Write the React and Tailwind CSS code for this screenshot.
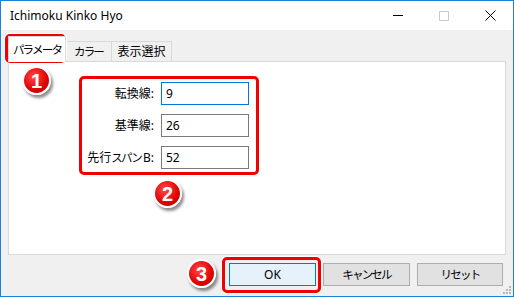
import React from 'react';

const font = { fontFamily: '"Noto Sans", "Noto Sans CJK JP", sans-serif' };

// katakana are narrower in the Windows UI font, so squeeze them a little
const Kana = ({ children }) => <span className="text-[11.5px] tracking-[-1.8px]">{children}</span>;

const Badge = ({ n, className }) => (
    <div
        className={`absolute w-[29px] h-[29px] rounded-full border-2 border-white bg-[radial-gradient(circle_at_40%_35%,#ff4a4a,#e00000_60%,#b80000)] shadow-[2px_3px_3px_rgba(0,0,0,0.45)] flex items-center justify-center text-white text-[20px] font-bold leading-none ${className}`}
        style={{ fontFamily: '"Liberation Sans", Arial, sans-serif' }}
    >
        {n}
    </div>
);

const Mark = ({ className }) => (
    <div className={`absolute rounded-[5px] border-[3px] border-[#f00000] shadow-[0_0_0_1px_#ffffff] pointer-events-none ${className}`} />
);

const fields = [
    { label: <>転換線:</>, value: '9', active: true },
    { label: <>基準線:</>, value: '26' },
    { label: <>先行<Kana>スパン</Kana><span className="ml-[2px]">B:</span></>, value: '52' },
];

export default function App() {
    return (
        <div
            className="relative w-[514px] h-[297px] border border-[#1883d7] bg-[#f0f0f0] flex flex-col text-[12px] text-black overflow-hidden"
            style={font}
        >
            {/* title bar */}
            <div className="h-[29px] bg-white flex items-center pl-[9px] shrink-0">
                <span className="flex-1 text-[12px]">Ichimoku Kinko Hyo</span>
                <div className="flex items-center h-full">
                    <div className="w-[46px] flex justify-center">
                        <div className="w-[10px] h-px bg-black" />
                    </div>
                    <div className="w-[46px] flex justify-center">
                        <div className="w-[10px] h-[10px] border border-[#cccccc]" />
                    </div>
                    <div className="w-[46px] flex justify-center">
                        <svg width="11" height="11" viewBox="0 0 11 11">
                            <path d="M0.5 0.5 L10.5 10.5 M10.5 0.5 L0.5 10.5" stroke="#000" strokeWidth="1" />
                        </svg>
                    </div>
                </div>
            </div>

            {/* tabs */}
            <div className="h-[31px] flex items-end pl-[7px] shrink-0">
                <div className="relative z-10 h-[26px] w-[58px] -mb-px bg-white border border-b-0 border-[#d9d9d9] flex items-center justify-center">
                    <Kana>パラメータ</Kana>
                </div>
                <div className="h-[20px] w-[46px] border border-l-0 border-b-0 border-[#d9d9d9] bg-[#f0f0f0] flex items-center justify-center">
                    <Kana>カラー</Kana>
                </div>
                <div className="h-[20px] w-[60px] border border-l-0 border-b-0 border-[#d9d9d9] bg-[#f0f0f0] flex items-center justify-center">
                    表示選択
                </div>
            </div>

            {/* panel */}
            <div className="mx-[7px] h-[194px] bg-white border border-[#d9d9d9] pt-[20px] pl-[64px] shrink-0">
                <div className="flex flex-col gap-[9px]">
                    {fields.map((f, i) => (
                        <div key={i} className="flex items-center gap-[7px]">
                            <div className="w-[81px] text-right">{f.label}</div>
                            <div
                                className={`w-[88px] h-[23px] border flex items-center px-[4px] ${f.active ? 'border-[#0078d7]' : 'border-[#7a7a7a]'}`}
                            >
                                {f.value}
                            </div>
                        </div>
                    ))}
                </div>
            </div>

            {/* buttons */}
            <div className="flex justify-end gap-[7px] pr-[10px] pt-[8px]">
                <button className="w-[87px] h-[23px] bg-[#e5f1fb] border border-[#0078d7]">OK</button>
                <button className="w-[87px] h-[23px] bg-[#e1e1e1] border border-[#adadad]"><Kana>キャンセル</Kana></button>
                <button className="w-[86px] h-[23px] bg-[#e1e1e1] border border-[#adadad]"><Kana>リセット</Kana></button>
            </div>

            {/* size grip */}
            <svg className="absolute right-[1px] bottom-[1px]" width="10" height="10" viewBox="0 0 10 10">
                <g fill="#b8b8b8">
                    <rect x="7" y="1" width="2" height="2" />
                    <rect x="4" y="4" width="2" height="2" />
                    <rect x="7" y="4" width="2" height="2" />
                    <rect x="1" y="7" width="2" height="2" />
                    <rect x="4" y="7" width="2" height="2" />
                    <rect x="7" y="7" width="2" height="2" />
                </g>
            </svg>

            {/* annotations */}
            <Mark className="left-[4px] top-[33px] w-[61px] h-[29px]" />
            <Mark className="left-[78px] top-[75px] w-[180px] h-[99px]" />
            <Mark className="left-[221px] top-[256px] w-[99px] h-[36px]" />
            <Badge n="1" className="left-[21px] top-[65px]" />
            <Badge n="2" className="left-[152px] top-[178px]" />
            <Badge n="3" className="left-[186px] top-[258px]" />
        </div>
    );
}
